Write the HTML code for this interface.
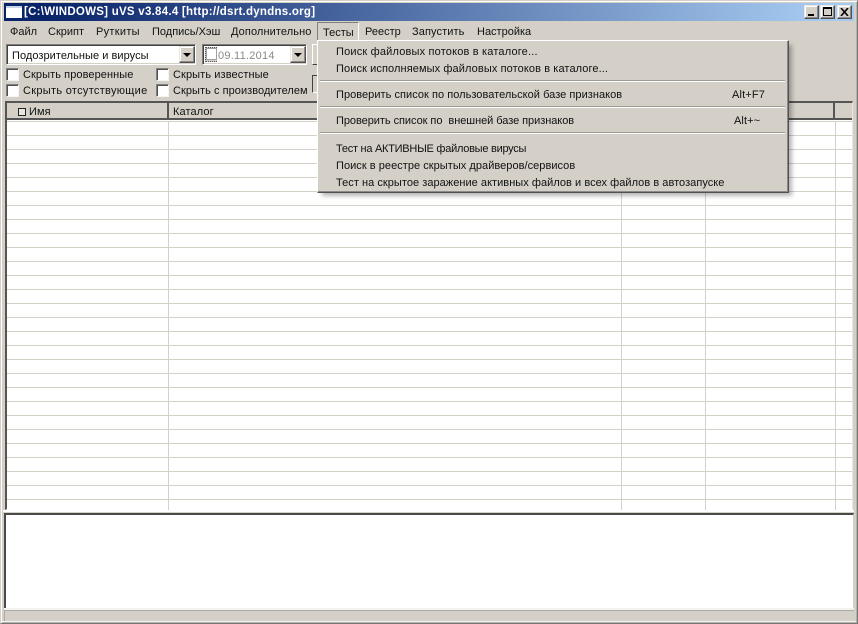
<!DOCTYPE html>
<html><head><meta charset="utf-8"><style>
*{box-sizing:border-box}
html,body{margin:0;padding:0;width:858px;height:624px;overflow:hidden;background:#d4d0c8}
body{position:relative;font:11px/13px "Liberation Sans",sans-serif;color:#111}
.a,.t{position:absolute}
.t{white-space:nowrap}
.sunk{position:absolute;background:#fff;border:1px solid;border-color:#808080 #fff #fff #808080;box-shadow:inset 1px 1px 0 #404040,inset -1px -1px 0 #d4d0c8}
.cb{position:absolute;width:13px;height:13px;background:#fff;border:1px solid;border-color:#808080 #f4f4f4 #f4f4f4 #808080;box-shadow:inset 1px 1px 0 #505050}
.btn{position:absolute;background:#d4d0c8;border:1px solid;border-color:#e8e6e0 #505050 #505050 #e8e6e0;box-shadow:inset -1px -1px 0 #8a8a8a,inset 1px 1px 0 #fff}
.arr{position:absolute;width:0;height:0;border:4px solid transparent;border-top:4px solid #000;border-bottom:0}
.h{position:absolute;left:7px;width:845px;height:1px;background:#d4d1c9}
.v{position:absolute;top:121px;width:1px;height:389px;background:#d4d1c9}
.sep{position:absolute;left:320px;width:465px;height:2px;border-top:1px solid #9c9a94;border-bottom:1px solid #fff}
.hd{position:absolute;top:102px;height:18px;background:#d4d0c8;border-right:2px solid #555;border-bottom:2px solid #555}
.m{position:absolute;left:336px}
</style></head><body>
<div class="a" style="left:0;top:0;width:858px;height:624px;border:1px solid;border-color:#d4d0c8 #777 #777 #d4d0c8;box-shadow:inset 1px 1px 0 #fff,inset -1px -1px 0 #b4b2aa"></div>
<div class="a" style="left:4px;top:3px;width:850px;height:18px;background:linear-gradient(90deg,#0a246a 0%,#0a246a 5%,#a6caf0 96%)"></div>
<div class="a" style="left:6px;top:6px;width:16px;height:12px;background:#fff;border-top:2px solid #c8d4ec"></div>
<div class="t" style="left:24px;top:6px;color:#fff;font-weight:bold;font-size:11.5px;letter-spacing:.26px">[C:\WINDOWS] uVS v3.84.4 [http://dsrt.dyndns.org]</div>
<div class="btn" style="left:804px;top:5px;width:15px;height:14px"></div><div class="a" style="left:808px;top:14px;width:6px;height:2px;background:#000"></div>
<div class="btn" style="left:820px;top:5px;width:15px;height:14px"></div><div class="a" style="left:823px;top:7px;width:9px;height:9px;border:1px solid #000;border-top-width:2px"></div>
<div class="btn" style="left:837px;top:5px;width:15px;height:14px"></div>
<svg class="a" style="left:840px;top:8px" width="9" height="8"><path d="M1 0L8 8M8 0L1 8" stroke="#000" stroke-width="1.6"/></svg>

<div class="t" style="left:10px;top:26px">Файл</div>
<div class="t" style="left:48px;top:26px">Скрипт</div>
<div class="t" style="left:96px;top:26px;letter-spacing:.3px">Руткиты</div>
<div class="t" style="left:152px;top:26px">Подпись/Хэш</div>
<div class="t" style="left:231px;top:26px;letter-spacing:.1px">Дополнительно</div>
<div class="a" style="left:317px;top:22px;width:42px;height:19px;border:1px solid;border-color:#808080 #fff #d4d0c8 #808080"></div>
<div class="t" style="left:323px;top:27px">Тесты</div>
<div class="t" style="left:365px;top:26px">Реестр</div>
<div class="t" style="left:412px;top:26px;letter-spacing:.1px">Запустить</div>
<div class="t" style="left:477px;top:26px">Настройка</div>

<div class="sunk" style="left:6px;top:44px;width:190px;height:21px"></div>
<div class="t" style="left:12px;top:50px;letter-spacing:.05px">Подозрительные и вирусы</div>
<div class="btn" style="left:179px;top:46px;width:16px;height:17px"></div><div class="arr" style="left:183px;top:53px"></div>
<div class="sunk" style="left:202px;top:44px;width:105px;height:21px"></div>
<div class="a" style="left:205px;top:47px;width:12px;height:15px;background:#d4d0c8;border:1px dotted #555"></div>
<div class="a" style="left:206px;top:48px;width:11px;height:12px;background:#fff;border:1px solid #a0a0a0"></div>
<div class="t" style="left:218px;top:50px;color:#888;letter-spacing:.25px">09.11.2014</div>
<div class="btn" style="left:290px;top:46px;width:16px;height:17px"></div><div class="arr" style="left:294px;top:53px"></div>
<div class="a" style="left:312px;top:44px;width:8px;height:21px;border:1px solid;border-color:#fff #404040 #404040 #fff"></div>
<div class="a" style="left:312px;top:75px;width:8px;height:18px;border:1px solid;border-color:#404040 #fff #fff #404040"></div>

<div class="cb" style="left:6px;top:68px"></div><div class="t" style="left:23px;top:69px;letter-spacing:.08px">Скрыть проверенные</div>
<div class="cb" style="left:156px;top:68px"></div><div class="t" style="left:173px;top:69px;letter-spacing:.1px">Скрыть известные</div>
<div class="cb" style="left:6px;top:84px"></div><div class="t" style="left:23px;top:85px;letter-spacing:.3px">Скрыть отсутствующие</div>
<div class="cb" style="left:156px;top:84px"></div><div class="t" style="left:173px;top:85px;letter-spacing:.05px">Скрыть с производителем</div>

<!-- grid -->
<div class="a" style="left:5px;top:101px;width:848px;height:409px;background:#fff;border-top:2px solid #555;border-left:2px solid #555;border-right:1px solid #e8e6e0;border-bottom:1px solid #fff"></div>
<div class="hd" style="left:7px;width:162px;top:103px;height:17px"></div>
<div class="hd" style="left:169px;width:666px;top:103px;height:17px"></div>
<div class="hd" style="left:835px;width:17px;border-right:0;top:103px;height:17px"></div>
<div class="a" style="left:18px;top:108px;width:8px;height:8px;border:1px solid #222;background:#e8e6e0"></div>
<div class="t" style="left:29px;top:106px;letter-spacing:.1px">Имя</div>
<div class="t" style="left:173px;top:106px;letter-spacing:.1px">Каталог</div>
<div class="h" style="top:121px"></div><div class="h" style="top:135px"></div><div class="h" style="top:149px"></div><div class="h" style="top:163px"></div><div class="h" style="top:177px"></div><div class="h" style="top:191px"></div><div class="h" style="top:205px"></div><div class="h" style="top:219px"></div><div class="h" style="top:233px"></div><div class="h" style="top:247px"></div><div class="h" style="top:261px"></div><div class="h" style="top:275px"></div><div class="h" style="top:289px"></div><div class="h" style="top:303px"></div><div class="h" style="top:317px"></div><div class="h" style="top:331px"></div><div class="h" style="top:345px"></div><div class="h" style="top:359px"></div><div class="h" style="top:373px"></div><div class="h" style="top:387px"></div><div class="h" style="top:401px"></div><div class="h" style="top:415px"></div><div class="h" style="top:429px"></div><div class="h" style="top:443px"></div><div class="h" style="top:457px"></div><div class="h" style="top:471px"></div><div class="h" style="top:485px"></div><div class="h" style="top:499px"></div>
<div class="v" style="left:168px"></div><div class="v" style="left:621px"></div><div class="v" style="left:705px"></div><div class="v" style="left:835px"></div>
<div class="a" style="left:3px;top:510px;width:851px;height:2px;background:#fff"></div>

<!-- lower memo -->
<div class="a" style="left:4px;top:513px;width:850px;height:96px;background:#fff;border-top:2px solid #4a4a4a;border-left:2px solid #4a4a4a;border-right:1px solid #d4d0c8;border-bottom:1px solid #d4d0c8"></div>
<div class="a" style="left:4px;top:608px;width:850px;height:2px;background:#f4f3ef"></div>
<div class="a" style="left:4px;top:610px;width:850px;height:11px;background:#d4d0c8;border-left:1px solid #aaa;border-top:1px solid #aaa"></div>
<div class="a" style="left:2px;top:621px;width:854px;height:1px;background:#f4f3ef"></div>

<!-- menu -->
<div class="a" style="left:322px;top:45px;width:470px;height:151px;background:rgba(0,0,0,.28);filter:blur(2px)"></div>
<div class="a" style="left:317px;top:40px;width:472px;height:153px;background:#d4d0c8;border:1px solid;border-color:#fff #505050 #505050 #fff;box-shadow:inset -1px -1px 0 #8a8a8a"></div>
<div class="t m" style="top:46px;letter-spacing:.18px">Поиск файловых потоков в каталоге...</div>
<div class="t m" style="top:63px;letter-spacing:.1px">Поиск исполняемых файловых потоков в каталоге...</div>
<div class="sep" style="top:80px"></div>
<div class="t m" style="top:89px;letter-spacing:.04px">Проверить список по пользовательской базе признаков</div>
<div class="t" style="left:732px;top:89px;letter-spacing:.15px">Alt+F7</div>
<div class="sep" style="top:106px"></div>
<div class="t m" style="top:115px;letter-spacing:-.05px">Проверить список по&nbsp; внешней базе признаков</div>
<div class="t" style="left:734px;top:115px;letter-spacing:.1px">Alt+~</div>
<div class="sep" style="top:132px"></div>
<div class="t m" style="top:143px;letter-spacing:-.26px">Тест на АКТИВНЫЕ файловые вирусы</div>
<div class="t m" style="top:160px;letter-spacing:.04px">Поиск в реестре скрытых драйверов/сервисов</div>
<div class="t m" style="top:177px;letter-spacing:.04px">Тест на скрытое заражение активных файлов и всех файлов в автозапуске</div>
</body></html>
